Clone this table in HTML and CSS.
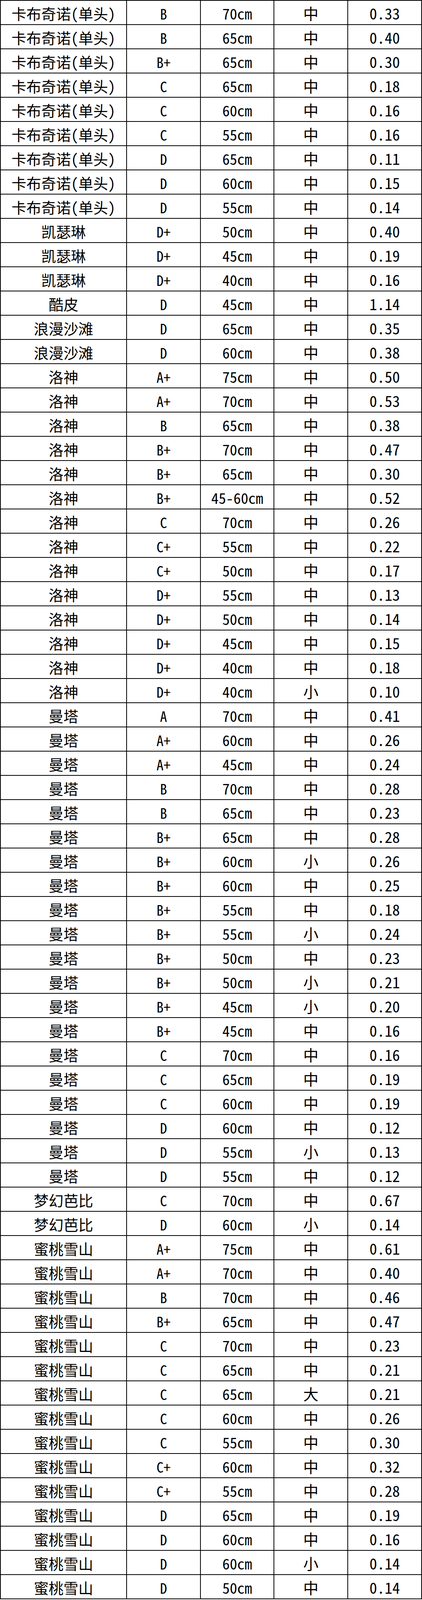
FILE: index.html
```html
<!DOCTYPE html>
<html lang="zh-CN">
<head>
<meta charset="utf-8">
<title>价格表</title>
<link rel="stylesheet" href="styles.css">
</head>
<body>
<div class="sheet">
<div class="cell name">卡布奇诺(单头)</div><div class="cell grade">B</div><div class="cell size">70cm</div><div class="cell kind">中</div><div class="cell val">0.33</div>
<div class="cell name">卡布奇诺(单头)</div><div class="cell grade">B</div><div class="cell size">65cm</div><div class="cell kind">中</div><div class="cell val">0.40</div>
<div class="cell name">卡布奇诺(单头)</div><div class="cell grade">B+</div><div class="cell size">65cm</div><div class="cell kind">中</div><div class="cell val">0.30</div>
<div class="cell name">卡布奇诺(单头)</div><div class="cell grade">C</div><div class="cell size">65cm</div><div class="cell kind">中</div><div class="cell val">0.18</div>
<div class="cell name">卡布奇诺(单头)</div><div class="cell grade">C</div><div class="cell size">60cm</div><div class="cell kind">中</div><div class="cell val">0.16</div>
<div class="cell name">卡布奇诺(单头)</div><div class="cell grade">C</div><div class="cell size">55cm</div><div class="cell kind">中</div><div class="cell val">0.16</div>
<div class="cell name">卡布奇诺(单头)</div><div class="cell grade">D</div><div class="cell size">65cm</div><div class="cell kind">中</div><div class="cell val">0.11</div>
<div class="cell name">卡布奇诺(单头)</div><div class="cell grade">D</div><div class="cell size">60cm</div><div class="cell kind">中</div><div class="cell val">0.15</div>
<div class="cell name">卡布奇诺(单头)</div><div class="cell grade">D</div><div class="cell size">55cm</div><div class="cell kind">中</div><div class="cell val">0.14</div>
<div class="cell name">凯瑟琳</div><div class="cell grade">D+</div><div class="cell size">50cm</div><div class="cell kind">中</div><div class="cell val">0.40</div>
<div class="cell name">凯瑟琳</div><div class="cell grade">D+</div><div class="cell size">45cm</div><div class="cell kind">中</div><div class="cell val">0.19</div>
<div class="cell name">凯瑟琳</div><div class="cell grade">D+</div><div class="cell size">40cm</div><div class="cell kind">中</div><div class="cell val">0.16</div>
<div class="cell name">酷皮</div><div class="cell grade">D</div><div class="cell size">45cm</div><div class="cell kind">中</div><div class="cell val">1.14</div>
<div class="cell name">浪漫沙滩</div><div class="cell grade">D</div><div class="cell size">65cm</div><div class="cell kind">中</div><div class="cell val">0.35</div>
<div class="cell name">浪漫沙滩</div><div class="cell grade">D</div><div class="cell size">60cm</div><div class="cell kind">中</div><div class="cell val">0.38</div>
<div class="cell name">洛神</div><div class="cell grade">A+</div><div class="cell size">75cm</div><div class="cell kind">中</div><div class="cell val">0.50</div>
<div class="cell name">洛神</div><div class="cell grade">A+</div><div class="cell size">70cm</div><div class="cell kind">中</div><div class="cell val">0.53</div>
<div class="cell name">洛神</div><div class="cell grade">B</div><div class="cell size">65cm</div><div class="cell kind">中</div><div class="cell val">0.38</div>
<div class="cell name">洛神</div><div class="cell grade">B+</div><div class="cell size">70cm</div><div class="cell kind">中</div><div class="cell val">0.47</div>
<div class="cell name">洛神</div><div class="cell grade">B+</div><div class="cell size">65cm</div><div class="cell kind">中</div><div class="cell val">0.30</div>
<div class="cell name">洛神</div><div class="cell grade">B+</div><div class="cell size">45-60cm</div><div class="cell kind">中</div><div class="cell val">0.52</div>
<div class="cell name">洛神</div><div class="cell grade">C</div><div class="cell size">70cm</div><div class="cell kind">中</div><div class="cell val">0.26</div>
<div class="cell name">洛神</div><div class="cell grade">C+</div><div class="cell size">55cm</div><div class="cell kind">中</div><div class="cell val">0.22</div>
<div class="cell name">洛神</div><div class="cell grade">C+</div><div class="cell size">50cm</div><div class="cell kind">中</div><div class="cell val">0.17</div>
<div class="cell name">洛神</div><div class="cell grade">D+</div><div class="cell size">55cm</div><div class="cell kind">中</div><div class="cell val">0.13</div>
<div class="cell name">洛神</div><div class="cell grade">D+</div><div class="cell size">50cm</div><div class="cell kind">中</div><div class="cell val">0.14</div>
<div class="cell name">洛神</div><div class="cell grade">D+</div><div class="cell size">45cm</div><div class="cell kind">中</div><div class="cell val">0.15</div>
<div class="cell name">洛神</div><div class="cell grade">D+</div><div class="cell size">40cm</div><div class="cell kind">中</div><div class="cell val">0.18</div>
<div class="cell name">洛神</div><div class="cell grade">D+</div><div class="cell size">40cm</div><div class="cell kind">小</div><div class="cell val">0.10</div>
<div class="cell name">曼塔</div><div class="cell grade">A</div><div class="cell size">70cm</div><div class="cell kind">中</div><div class="cell val">0.41</div>
<div class="cell name">曼塔</div><div class="cell grade">A+</div><div class="cell size">60cm</div><div class="cell kind">中</div><div class="cell val">0.26</div>
<div class="cell name">曼塔</div><div class="cell grade">A+</div><div class="cell size">45cm</div><div class="cell kind">中</div><div class="cell val">0.24</div>
<div class="cell name">曼塔</div><div class="cell grade">B</div><div class="cell size">70cm</div><div class="cell kind">中</div><div class="cell val">0.28</div>
<div class="cell name">曼塔</div><div class="cell grade">B</div><div class="cell size">65cm</div><div class="cell kind">中</div><div class="cell val">0.23</div>
<div class="cell name">曼塔</div><div class="cell grade">B+</div><div class="cell size">65cm</div><div class="cell kind">中</div><div class="cell val">0.28</div>
<div class="cell name">曼塔</div><div class="cell grade">B+</div><div class="cell size">60cm</div><div class="cell kind">小</div><div class="cell val">0.26</div>
<div class="cell name">曼塔</div><div class="cell grade">B+</div><div class="cell size">60cm</div><div class="cell kind">中</div><div class="cell val">0.25</div>
<div class="cell name">曼塔</div><div class="cell grade">B+</div><div class="cell size">55cm</div><div class="cell kind">中</div><div class="cell val">0.18</div>
<div class="cell name">曼塔</div><div class="cell grade">B+</div><div class="cell size">55cm</div><div class="cell kind">小</div><div class="cell val">0.24</div>
<div class="cell name">曼塔</div><div class="cell grade">B+</div><div class="cell size">50cm</div><div class="cell kind">中</div><div class="cell val">0.23</div>
<div class="cell name">曼塔</div><div class="cell grade">B+</div><div class="cell size">50cm</div><div class="cell kind">小</div><div class="cell val">0.21</div>
<div class="cell name">曼塔</div><div class="cell grade">B+</div><div class="cell size">45cm</div><div class="cell kind">小</div><div class="cell val">0.20</div>
<div class="cell name">曼塔</div><div class="cell grade">B+</div><div class="cell size">45cm</div><div class="cell kind">中</div><div class="cell val">0.16</div>
<div class="cell name">曼塔</div><div class="cell grade">C</div><div class="cell size">70cm</div><div class="cell kind">中</div><div class="cell val">0.16</div>
<div class="cell name">曼塔</div><div class="cell grade">C</div><div class="cell size">65cm</div><div class="cell kind">中</div><div class="cell val">0.19</div>
<div class="cell name">曼塔</div><div class="cell grade">C</div><div class="cell size">60cm</div><div class="cell kind">中</div><div class="cell val">0.19</div>
<div class="cell name">曼塔</div><div class="cell grade">D</div><div class="cell size">60cm</div><div class="cell kind">中</div><div class="cell val">0.12</div>
<div class="cell name">曼塔</div><div class="cell grade">D</div><div class="cell size">55cm</div><div class="cell kind">小</div><div class="cell val">0.13</div>
<div class="cell name">曼塔</div><div class="cell grade">D</div><div class="cell size">55cm</div><div class="cell kind">中</div><div class="cell val">0.12</div>
<div class="cell name">梦幻芭比</div><div class="cell grade">C</div><div class="cell size">70cm</div><div class="cell kind">中</div><div class="cell val">0.67</div>
<div class="cell name">梦幻芭比</div><div class="cell grade">D</div><div class="cell size">60cm</div><div class="cell kind">小</div><div class="cell val">0.14</div>
<div class="cell name">蜜桃雪山</div><div class="cell grade">A+</div><div class="cell size">75cm</div><div class="cell kind">中</div><div class="cell val">0.61</div>
<div class="cell name">蜜桃雪山</div><div class="cell grade">A+</div><div class="cell size">70cm</div><div class="cell kind">中</div><div class="cell val">0.40</div>
<div class="cell name">蜜桃雪山</div><div class="cell grade">B</div><div class="cell size">70cm</div><div class="cell kind">中</div><div class="cell val">0.46</div>
<div class="cell name">蜜桃雪山</div><div class="cell grade">B+</div><div class="cell size">65cm</div><div class="cell kind">中</div><div class="cell val">0.47</div>
<div class="cell name">蜜桃雪山</div><div class="cell grade">C</div><div class="cell size">70cm</div><div class="cell kind">中</div><div class="cell val">0.23</div>
<div class="cell name">蜜桃雪山</div><div class="cell grade">C</div><div class="cell size">65cm</div><div class="cell kind">中</div><div class="cell val">0.21</div>
<div class="cell name">蜜桃雪山</div><div class="cell grade">C</div><div class="cell size">65cm</div><div class="cell kind">大</div><div class="cell val">0.21</div>
<div class="cell name">蜜桃雪山</div><div class="cell grade">C</div><div class="cell size">60cm</div><div class="cell kind">中</div><div class="cell val">0.26</div>
<div class="cell name">蜜桃雪山</div><div class="cell grade">C</div><div class="cell size">55cm</div><div class="cell kind">中</div><div class="cell val">0.30</div>
<div class="cell name">蜜桃雪山</div><div class="cell grade">C+</div><div class="cell size">60cm</div><div class="cell kind">中</div><div class="cell val">0.32</div>
<div class="cell name">蜜桃雪山</div><div class="cell grade">C+</div><div class="cell size">55cm</div><div class="cell kind">中</div><div class="cell val">0.28</div>
<div class="cell name">蜜桃雪山</div><div class="cell grade">D</div><div class="cell size">65cm</div><div class="cell kind">中</div><div class="cell val">0.19</div>
<div class="cell name">蜜桃雪山</div><div class="cell grade">D</div><div class="cell size">60cm</div><div class="cell kind">中</div><div class="cell val">0.16</div>
<div class="cell name">蜜桃雪山</div><div class="cell grade">D</div><div class="cell size">60cm</div><div class="cell kind">小</div><div class="cell val">0.14</div>
<div class="cell name">蜜桃雪山</div><div class="cell grade">D</div><div class="cell size">50cm</div><div class="cell kind">中</div><div class="cell val">0.14</div>
</div>
</body>
</html>
```
FILE: styles.css
```css
:root {
  --u: calc(100vw / 1080);
  --line: calc(2 * var(--u));
}

html, body {
  margin: 0;
  padding: 0;
  background: #ffffff;
  overflow: hidden;
}

.sheet {
  width: 100vw;
  box-sizing: border-box;
  display: grid;
  grid-template-columns:
    calc(323 * var(--u))
    calc(189 * var(--u))
    calc(188 * var(--u))
    calc(189 * var(--u))
    calc(189 * var(--u));
  grid-auto-rows: calc((100vh - 3 * var(--u)) / 66);
  border-top: var(--line) solid #000;
  border-left: var(--line) solid #000;
  color: #000;
  font-family: "Noto Sans CJK SC", sans-serif;
  font-feature-settings: "hwid" 1;
  font-size: calc(39 * var(--u));
}

.cell {
  box-sizing: border-box;
  border-right: var(--line) solid #000;
  border-bottom: var(--line) solid #000;
  display: flex;
  align-items: center;
  justify-content: center;
  padding-top: calc(3 * var(--u));
  line-height: 1;
  white-space: nowrap;
}

.name {
  font-size: calc(38 * var(--u));
}

.grade {
  font-size: calc(36 * var(--u));
}

.size {
  font-size: calc(38 * var(--u));
}

.kind {
  font-size: calc(39 * var(--u));
}

.val {
  font-size: calc(39 * var(--u));
}
```
